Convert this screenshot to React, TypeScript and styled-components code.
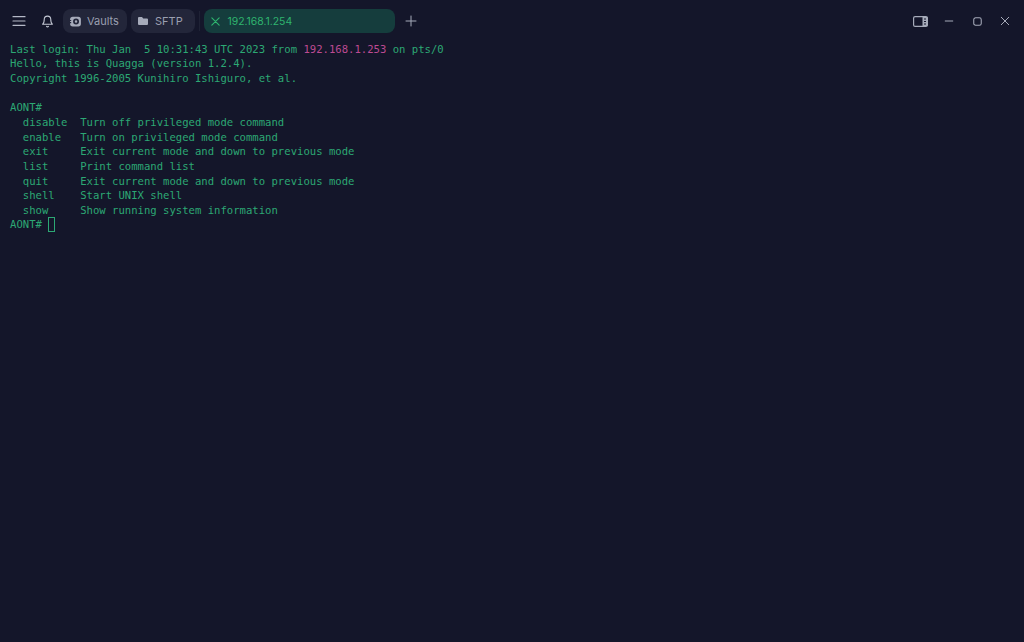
import React from "react";
import styled, { createGlobalStyle } from "styled-components";

const Global = createGlobalStyle`
  html, body { margin: 0; padding: 0; background: #14162a; }
  body { font-family: "Inter", "Liberation Sans", sans-serif; }
`;
const Page = styled.div`
  width: 1024px; height: 642px; background: #14162a; overflow: hidden;
  display: flex; flex-direction: column;
`;
const TitleBar = styled.header`
  height: 32.6px; padding-top: 9px; box-sizing: content-box;
  display: flex; align-items: flex-start;
`;
const IconButton = styled.button<{ $w: number; $color?: string }>`
  width: ${(p) => p.$w}px; height: 24px; padding: 0; border: 0; background: transparent;
  color: ${(p) => p.$color ?? "#b4b8c6"}; display: flex; align-items: center; justify-content: center; flex: none;
`;
const Pill = styled.div`
  height: 24px; border-radius: 8px; background: #23263a; color: #9a9fb0;
  display: flex; align-items: center; box-sizing: border-box; font-size: 11px; flex: none;
`;
const VaultPill = styled(Pill)`
  width: 64px; padding-left: 6px; gap: 5px; margin-left: 6px;
`;
const SftpPill = styled(Pill)`
  width: 64px; padding-left: 6px; gap: 6px; margin-left: 4px;
`;
const Divider = styled.span`
  width: 1px; height: 20px; margin: 2px 4px 0; background: #1f2235; flex: none;
`;
const ActiveTab = styled(Pill)`
  width: 191px; background: #153d3d; color: #2fb56f; padding-left: 6px; gap: 6.5px; font-size: 10.4px;
`;
const Spacer = styled.div`flex: 1;`;
const WindowControls = styled.div`
  display: flex; align-items: center; height: 24px; flex: none; padding-right: 5px;
`;
const Terminal = styled.main`
  padding: 0 0 0 10px; font-family: "DejaVu Sans Mono", monospace; font-size: 10.6px;
  line-height: 14.67px; color: #2ca874; white-space: pre;
`;
const Line = styled.div`height: 14.67px;`;
const Pink = styled.span`color: #bd4a92;`;
const Cursor = styled.span`
  display: inline-block; width: 7px; height: 15px; box-sizing: border-box;
  border: 1px solid #2ca874; vertical-align: top;
`;

const Stroke = (p: { s: number; children: React.ReactNode; w?: number }) => (
  <svg width={p.s} height={p.s} viewBox="0 0 24 24" fill="none" stroke="currentColor" strokeWidth={p.w ?? 2} strokeLinecap="round" strokeLinejoin="round">{p.children}</svg>
);

const lines = [
  "Hello, this is Quagga (version 1.2.4).",
  "Copyright 1996-2005 Kunihiro Ishiguro, et al.",
  "",
  "AONT#",
  "  disable  Turn off privileged mode command",
  "  enable   Turn on privileged mode command",
  "  exit     Exit current mode and down to previous mode",
  "  list     Print command list",
  "  quit     Exit current mode and down to previous mode",
  "  shell    Start UNIX shell",
  "  show     Show running system information",
];

export default function App() {
  return (
    <Page>
      <Global />
      <TitleBar>
        <IconButton $w={37} aria-label="menu">
          <Stroke s={16} w={1.8}><path d="M3 5.5h18M3 12h18M3 18.5h18" /></Stroke>
        </IconButton>
        <IconButton $w={20} $color="#c4c8d4" aria-label="notifications">
          <Stroke s={13} w={2}><path d="M6 8a6 6 0 0 1 12 0c0 7 3 9 3 9H3s3-2 3-9" /><path d="M10.3 21a2 2 0 0 0 3.4 0" /></Stroke>
        </IconButton>
        <VaultPill>
          <svg width="13" height="13" viewBox="0 0 24 24"><path fill="#a6abba" fillRule="evenodd" d="M7 3h10a5 5 0 0 1 5 5v8a5 5 0 0 1-5 5H7a5 5 0 0 1-5-5v-1h2v-2H2v-2h2V9H2V8a5 5 0 0 1 5-5zm6 3.5a5.5 5.5 0 1 0 0 11 5.5 5.5 0 0 0 0-11zm0 3.2a2.3 2.3 0 1 1 0 4.6 2.3 2.3 0 0 1 0-4.6z" /></svg>
          Vaults
        </VaultPill>
        <SftpPill>
          <svg width="12" height="12" viewBox="0 0 24 24"><path fill="#a6abba" d="M2 6a2 2 0 0 1 2-2h6l2.5 3H20a2 2 0 0 1 2 2v9a2 2 0 0 1-2 2H4a2 2 0 0 1-2-2z" /></svg>
          SFTP
        </SftpPill>
        <Divider />
        <ActiveTab>
          <Stroke s={11} w={2.4}><path d="M4 4l16 16M20 4L4 20" /></Stroke>
          192.168.1.254
        </ActiveTab>
        <IconButton $w={32} $color="#a6abba" aria-label="new tab">
          <Stroke s={12} w={2}><path d="M12 2v20M2 12h20" /></Stroke>
        </IconButton>
        <Spacer />
        <WindowControls>
          <IconButton $w={30} $color="#a6abba" aria-label="side panel">
            <svg width="15" height="11" viewBox="0 0 15 11"><rect x="0.6" y="0.6" width="13.8" height="9.8" rx="1.5" fill="none" stroke="currentColor" strokeWidth="1.2" /><rect x="9.5" y="1" width="5" height="9" fill="currentColor" /><path d="M11 3h2M11 5.5h2M11 8h2" stroke="#14162a" strokeWidth="1" /></svg>
          </IconButton>
          <IconButton $w={28} $color="#a6abba" aria-label="minimize">
            <Stroke s={10} w={2.4}><path d="M3 12h18" /></Stroke>
          </IconButton>
          <IconButton $w={28} $color="#a6abba" aria-label="maximize">
            <Stroke s={9} w={2.8}><rect x="2" y="2" width="20" height="20" rx="5" /></Stroke>
          </IconButton>
          <IconButton $w={28} $color="#a6abba" aria-label="close">
            <Stroke s={10} w={2.4}><path d="M3 3l18 18M21 3L3 21" /></Stroke>
          </IconButton>
        </WindowControls>
      </TitleBar>
      <Terminal>
        <Line>Last login: Thu Jan  5 10:31:43 UTC 2023 from <Pink>192.168.1.253</Pink> on pts/0</Line>
        {lines.map((l, i) => <Line key={i}>{l}</Line>)}
        <Line>AONT# <Cursor /></Line>
      </Terminal>
    </Page>
  );
}
